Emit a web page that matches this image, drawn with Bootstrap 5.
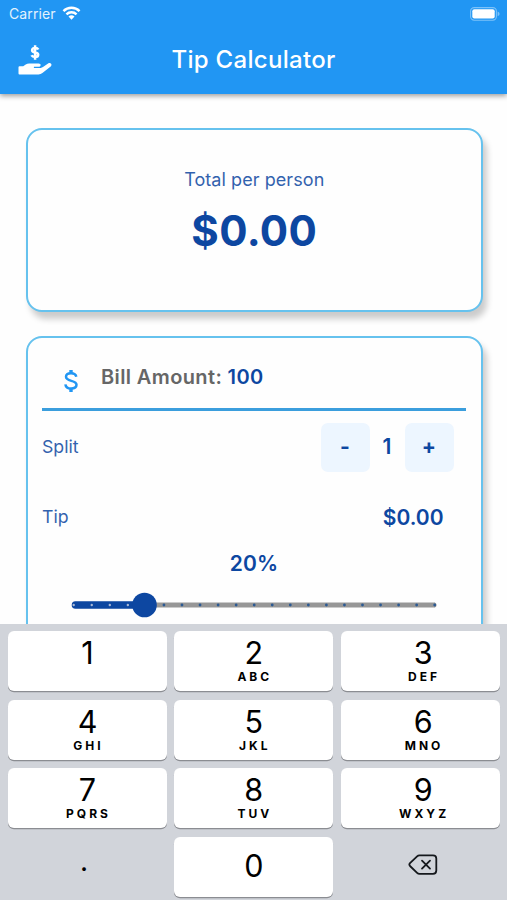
<!DOCTYPE html>
<html lang="en">
<head>
<meta charset="utf-8">
<meta name="viewport" content="width=device-width, initial-scale=1">
<title>Tip Calculator</title>
<link rel="stylesheet" href="https://cdn.jsdelivr.net/npm/bootstrap@5.3.0/dist/css/bootstrap.min.css">
<style>
  :root { --navy: #0d47a1; --blue: #2196f3; }
  body { font-family: Inter, "Liberation Sans", sans-serif; background: #fefefe; }
  svg { display: block; flex: none; }
  .app-bar { background: var(--blue); height: 94px; box-shadow: 0 2px 5px rgba(0,0,0,.38); z-index: 1; }
  .status-bar { height: 27px; padding: 0 7px 0 9px; font-size: 14px; color: #e3f2fd; letter-spacing: .1px; }
  .status-left { gap: 6px; }
  .title-bar { display: grid; grid-template-columns: 60px 1fr 60px; height: 66px; padding-left: 18px; padding-right: 18px; }
  .title-bar h1 { font-size: 24px; font-weight: 500; letter-spacing: .3px; line-height: 1; }
  .screen-body { padding: 34px 24.5px 0 26px; gap: 24px; }
  .panel { border: 2px solid #66c2ee; border-radius: 16px; background: #fefefe; box-shadow: 4px 7px 6px rgba(0,0,0,.2); color: var(--navy); flex: none; }
  .total-panel { height: 183.5px; padding-top: 37px; }
  .total-label { font-size: 18px; line-height: 26px; letter-spacing: .07px; opacity: .85; }
  .total-value { font-size: 42px; line-height: 50px; letter-spacing: .4px; margin-top: 13px; }
  .bill-panel { height: 340px; padding: 0 14.5px 0 14px; }
  .bill-row { height: 73.5px; border-bottom: 3px solid #3b9edd; padding: 9px 0 0 21px; }
  .bill-icon { margin-top: 7px; }
  .bill-text { font-size: 20px; letter-spacing: .38px; color: #666; margin-left: 22px; }
  .bill-text span { color: var(--navy); }
  .split-row { height: 72px; padding-right: 12.5px; }
  .tip-row { height: 69px; padding-right: 22.5px; }
  .row-label { font-size: 17.7px; opacity: .85; }
  .value-text { font-size: 21px; }
  .step-btn { width: 49px; height: 49px; border-radius: 7px; background: #edf6ff; color: var(--navy); font-size: 21px; padding: 0; }
  .step-btn:hover { background: #e0f0ff; color: var(--navy); }
  .step-count { width: 35px; }
  .percent { font-size: 21px; line-height: 24px; letter-spacing: .1px; }
  .slider { margin: 16px 0 0 24px; }
  .keypad { height: 276px; background: #d1d4da; display: grid; grid-template-columns: repeat(3, 159px); grid-template-rows: repeat(4, 60px); gap: 8.5px 7.3px; padding: 7px 7.6px 0 8px; z-index: 1; color: #000; }
  .pad-key { background: #fff; border-radius: 6px; box-shadow: 0 1.3px 0 #8b8d92; padding-top: 5px; }
  .pad-last { padding-left: 6px; }
  .pad-digit { font-size: 30.5px; line-height: 34px; }
  .pad-letters { font-size: 12px; line-height: 12px; font-weight: 700; letter-spacing: 3px; padding: 1px 0 0 2px; }
  .pad-zero { padding-top: 12px; }
  .pad-dot { font-size: 28px; line-height: 34px; padding-top: 7px; padding-right: 7px; }
</style>
</head>
<body>
<div class="d-flex flex-column vh-100 overflow-hidden">
  <header class="app-bar flex-shrink-0">
    <div class="status-bar d-flex align-items-center justify-content-between">
      <div class="status-left d-flex align-items-center">
        <span>Carrier</span>
        <svg width="19" height="15" viewBox="0 0 19 15" fill="#fff">
          <path d="M.6 4.3a12.6 12.6 0 0 1 17.8 0l-1.7 1.8a10.2 10.2 0 0 0-14.4 0z"/>
          <path d="M3.6 7.5a8.4 8.4 0 0 1 11.8 0l-1.7 1.8a6 6 0 0 0-8.4 0z"/>
          <path d="M6.5 10.6a4.3 4.3 0 0 1 6 0l-3 3.1z"/>
        </svg>
      </div>
      <svg width="30" height="14" viewBox="0 0 30 14">
        <rect x=".6" y=".6" width="25.8" height="12.6" rx="3.6" fill="none" stroke="#7cc2f9" stroke-width="1.1"/>
        <rect x="2.3" y="2.3" width="22.4" height="9.2" rx="2" fill="#fff"/>
        <path d="M27.6 4.6q2 .8 2 2.3t-2 2.3z" fill="#7cc2f9"/>
      </svg>
    </div>
    <div class="title-bar align-items-center">
      <svg width="34" height="32" viewBox="0 0 34 32" fill="#fff">
        <path d="M20.3 5.600C19.800 4.500 18.700 4 17.100 4c-1.800 0-3 .8-3 2.200 0 3.200 6.100 1.500 6.100 4.600 0 1.500-1.300 2.300-3.100 2.300-1.700 0-3-.6-3.600-1.800M17.100 1.200v14.600" fill="none" stroke="#fff" stroke-width="2.500"/>
        <path transform="translate(0 .6)" d="M.5 22.700q0-1 1-1h3.700l2.500-1.700q1.600-1.100 3.500-1.100h9.400c1.400 0 2.200.8 2 1.800-.2 1.100-1 1.500-2 1.500h-4.700v1.100h6.700c1 0 1.700-.3 2.400-.8l5.100-3.500c1.200-.8 2.400-.6 3 .2.700.9.500 1.800-.4 2.600l-8.300 6.700q-1.700 1.300-3.900 1.300H1.500q-1 0-1-1z"/>
      </svg>
      <h1 class="text-center text-white m-0">Tip Calculator</h1>
    </div>
  </header>

  <main class="screen-body d-flex flex-column flex-grow-1 overflow-hidden">
    <section class="panel total-panel text-center">
      <div class="total-label">Total per person</div>
      <div class="total-value fw-bold">$0.00</div>
    </section>

    <section class="panel bill-panel">
      <div class="bill-row d-flex align-items-center">
        <svg class="bill-icon" width="16" height="24" viewBox="0 0 16 24" fill="none" stroke="#2196f3" stroke-width="2.5">
          <path d="M13.300 7.800C12.900 5.600 11 4.300 8 4.300c-3 0-5 1.400-5 3.500 0 5.200 10.500 2.900 10.500 8 0 2.300-2.200 3.700-5.400 3.700-3.400 0-5.400-1.600-5.700-4.200"/>
          <path d="M8 1v3.300M8 19.500V23" stroke-width="3.4"/>
        </svg>
        <div class="bill-text fw-semibold">Bill Amount: <span>100</span></div>
      </div>
      <div class="split-row d-flex align-items-center">
        <span class="row-label me-auto">Split</span>
        <button class="btn step-btn fw-bold border-0" type="button">-</button>
        <span class="value-text step-count fw-semibold text-center">1</span>
        <button class="btn step-btn fw-bold border-0" type="button">+</button>
      </div>
      <div class="tip-row d-flex align-items-center justify-content-between">
        <span class="row-label">Tip</span>
        <span class="value-text fw-semibold">$0.00</span>
      </div>
      <div class="percent fw-semibold text-center">20%</div>
      <svg class="slider" width="376" height="26" viewBox="0 0 376 26">
        <path d="M78 13H368.5" stroke="#979797" stroke-width="5"/>
        <path d="M368 10.500a2.500 2.500 0 0 1 0 5z" fill="#979797"/>
        <path d="M9.500 13H78" stroke="#0d47a1" stroke-width="7.6" stroke-linecap="round"/>
        <path d="M7.700 13H78" stroke="#a9b9d6" stroke-width="2.4" stroke-linecap="round" stroke-dasharray="0 18.05"/>
        <path d="M97.950 13H369" stroke="#2b5a94" stroke-width="2.8" stroke-linecap="round" stroke-dasharray="0 18.05"/>
        <circle cx="78.500" cy="13" r="12.3" fill="#0d47a1"/>
      </svg>
    </section>
  </main>

  <div class="keypad flex-shrink-0 text-center">
    <div class="pad-key"><div class="pad-digit">1</div></div>
    <div class="pad-key"><div class="pad-digit">2</div><div class="pad-letters">ABC</div></div>
    <div class="pad-key pad-last"><div class="pad-digit">3</div><div class="pad-letters">DEF</div></div>
    <div class="pad-key"><div class="pad-digit">4</div><div class="pad-letters">GHI</div></div>
    <div class="pad-key"><div class="pad-digit">5</div><div class="pad-letters">JKL</div></div>
    <div class="pad-key pad-last"><div class="pad-digit">6</div><div class="pad-letters">MNO</div></div>
    <div class="pad-key"><div class="pad-digit">7</div><div class="pad-letters">PQRS</div></div>
    <div class="pad-key"><div class="pad-digit">8</div><div class="pad-letters">TUV</div></div>
    <div class="pad-key pad-last"><div class="pad-digit">9</div><div class="pad-letters">WXYZ</div></div>
    <div class="pad-dot">.</div>
    <div class="pad-key pad-zero"><div class="pad-digit">0</div></div>
    <div class="pad-last d-flex align-items-center justify-content-center pb-1">
      <svg width="30" height="22" viewBox="0 0 30 22" fill="none" stroke="#15181c" stroke-width="1.8" stroke-linejoin="round" stroke-linecap="round">
        <path d="M11.500 1.300H25q3.300 0 3.300 3.300v12q0 3.300-3.300 3.300H11.500q-1.400 0-2.400-1L2 12q-1.300-1.400 0-2.800l7.100-6.900q1-1 2.400-1z"/>
        <path d="M14 6.600l8 8M22 6.600l-8 8"/>
      </svg>
    </div>
  </div>
</div>
<script src="https://cdn.jsdelivr.net/npm/bootstrap@5.3.0/dist/js/bootstrap.bundle.min.js"></script>
</body>
</html>
